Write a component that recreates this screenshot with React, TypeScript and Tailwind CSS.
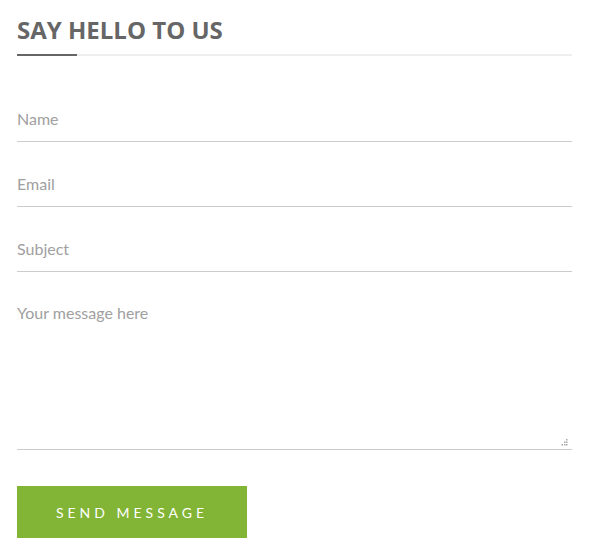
export default function App() {
  const fields = ['Name', 'Email', 'Subject'];

  return (
    <div className="w-[590px] h-[558px] bg-white pl-[17px] pr-[18px] pt-[14px]">
      <div className="relative border-b-2 border-[#eeeeee] pb-[8px]">
        <h2 className="text-[24px] leading-[32px] font-bold text-[#666666] font-['Open_Sans',sans-serif]">
          SAY HELLO TO US
        </h2>
        <span className="absolute left-0 -bottom-[2px] w-[60px] h-[2px] bg-[#666666]" />
      </div>

      <form className="flex flex-col pt-[40px] font-['Lato',sans-serif]">
        {fields.map((f) => (
          <input
            key={f}
            type="text"
            placeholder={f}
            className="h-[46px] mb-[19px] w-full border-b border-[#cccccc] text-[16px] text-[#666] placeholder:text-[#a0a0a0] outline-none bg-transparent"
          />
        ))}
        <div className="relative">
          <textarea
            placeholder="Your message here"
            className="block h-[159px] w-full resize-none border-b border-[#cccccc] pt-[11px] text-[16px] leading-[22px] text-[#666] placeholder:text-[#a0a0a0] outline-none bg-transparent"
          />
          {/* old-style resize grip */}
          <svg className="absolute right-[4px] bottom-[4px]" width="7" height="7" viewBox="0 0 7 7">
            <g fill="#a8a8a8">
              <rect x="5" y="0" width="1.5" height="1.5" />
              <rect x="3" y="2.5" width="1.5" height="1.5" />
              <rect x="5" y="2.5" width="1.5" height="1.5" />
              <rect x="0.5" y="5" width="1.5" height="1.5" />
              <rect x="3" y="5" width="1.5" height="1.5" />
              <rect x="5" y="5" width="1.5" height="1.5" />
            </g>
          </svg>
        </div>
        <button
          type="button"
          className="mt-[36px] w-[230px] h-[52px] bg-[#82b536] text-white text-[14px] tracking-[4px] font-['Lato',sans-serif]"
        >
          SEND MESSAGE
        </button>
      </form>
    </div>
  );
}
